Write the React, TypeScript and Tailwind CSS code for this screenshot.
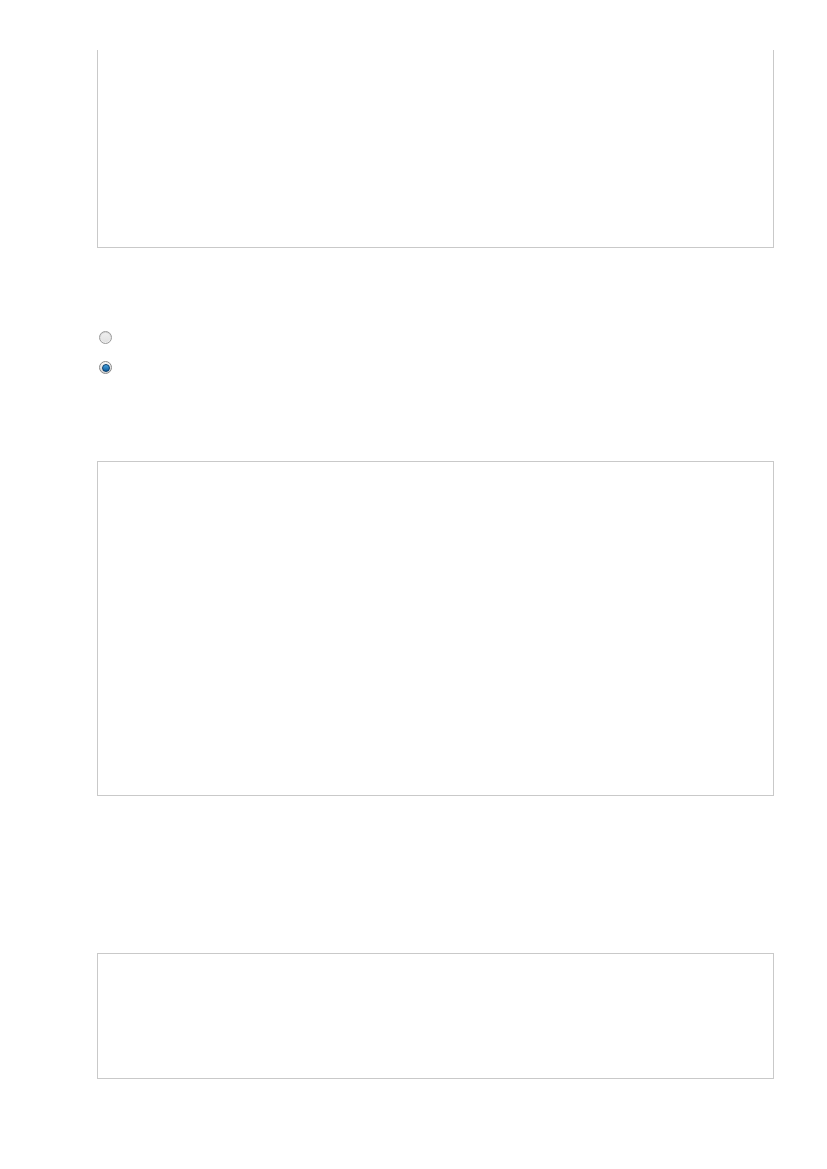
import React from "react";

function Radio({ checked }: { checked?: boolean }) {
  if (checked) {
    return (
      <div className="w-[13px] h-[13px] rounded-full border border-[#8a8a8a] bg-gradient-to-b from-[#f6f6f6] to-[#d4d4d4] flex items-center justify-center">
        <div className="w-[8px] h-[8px] rounded-full bg-gradient-to-b from-[#46a3e0] to-[#0a5c9c] border border-[#063b6a]" />
      </div>
    );
  }
  return (
    <div className="w-[13px] h-[13px] rounded-full border border-[#9a9a9a] bg-gradient-to-b from-[#d6d6d6] to-[#f2f2f2] flex items-center justify-center">
      <div className="w-[9px] h-[9px] rounded-full bg-gradient-to-b from-[#efefef] to-[#e2e2e2]" />
    </div>
  );
}

export default function App() {
  return (
    <div className="w-[827px] h-[1169px] bg-white pl-[97px] flex flex-col font-['Liberation_Sans',sans-serif]">
      <div className="mt-[50px] w-[677px] h-[198px] border-l border-r border-b border-[#c9c9c9]" />
      <div className="mt-[83px] flex flex-col gap-[17px] pl-[2px]">
        <Radio />
        <Radio checked />
      </div>
      <div className="mt-[87px] w-[677px] h-[335px] border border-[#c9c9c9]" />
      <div className="mt-[157px] w-[677px] h-[126px] border border-[#c9c9c9]" />
    </div>
  );
}
